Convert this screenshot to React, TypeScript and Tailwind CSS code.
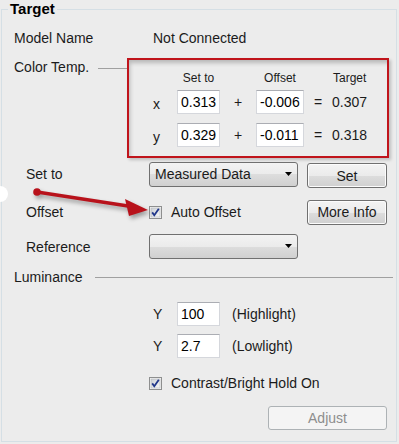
import React from 'react';

function TextBox({ value, w }: { value: string; w: string }) {
  return (
    <div
      className={`${w} flex h-[24px] items-center border border-[#d5d7dc] border-t-[#abadb3] bg-white pl-[3px] text-[14px] text-black`}
    >
      {value}
    </div>
  );
}

function Combo({ value }: { value?: string }) {
  return (
    <div className="flex h-[25px] w-[149px] items-center justify-between rounded-[3px] border border-[#707070] bg-[linear-gradient(to_bottom,#f3f3f3_0%,#ebebeb_50%,#dddddd_50%,#d0d0d0_100%)] pl-[5px] pr-[5px]">
      <span>{value}</span>
      <svg width="7" height="4" viewBox="0 0 7 4">
        <polygon points="0,0 7,0 3.5,4" fill="#000" />
      </svg>
    </div>
  );
}

function Button({ label, w, disabled }: { label: string; w: string; disabled?: boolean }) {
  if (disabled) {
    return (
      <div className={`${w} flex h-[24px] items-center justify-center rounded-[3px] border border-[#adb2b5] bg-[#f4f4f4] text-[#8d8d8d]`}>
        {label}
      </div>
    );
  }
  return (
    <div className={`${w} flex h-[25px] items-center justify-center rounded-[3px] border border-[#707070] bg-[linear-gradient(to_bottom,#f3f3f3_0%,#ebebeb_50%,#dddddd_50%,#d0d0d0_100%)] shadow-[inset_0_0_0_1px_#fcfcfc]`}>
      {label}
    </div>
  );
}

function CheckBox() {
  return (
    <svg width="13" height="13" viewBox="0 0 13 13" className="shrink-0">
      <defs>
        <linearGradient id="cb" x1="0" y1="0" x2="1" y2="1">
          <stop offset="0" stopColor="#cbcfd5" />
          <stop offset="1" stopColor="#f7f7f7" />
        </linearGradient>
      </defs>
      <rect x="0.5" y="0.5" width="12" height="12" fill="#f4f4f4" stroke="#8e8f8f" />
      <rect x="2" y="2" width="9" height="9" fill="url(#cb)" stroke="#b5b8bd" strokeWidth="0.6" />
      <path d="M3.2 6.4 L5.3 9.3 L9.8 2.8" fill="none" stroke="#21378a" strokeWidth="1.8" />
    </svg>
  );
}

function CtRow({ axis, set, offset, target, top }: { axis: string; set: string; offset: string; target: string; top: string }) {
  return (
    <div className={`${top} grid h-[24px] grid-cols-[24px_43px_36px_48px_28px_1fr] items-center text-[14px]`}>
      <span className="pt-[3px]">{axis}</span>
      <TextBox value={set} w="w-[43px]" />
      <span className="text-center">+</span>
      <TextBox value={offset} w="w-[48px]" />
      <span className="text-center">=</span>
      <span>{target}</span>
    </div>
  );
}

export default function App() {
  return (
    <div className="relative h-[444px] w-[399px] overflow-hidden bg-[#ececec] font-['Liberation_Sans',Arial,sans-serif] text-[14px] leading-[20px] text-[#1b1b1b]">
      <fieldset className="ml-[1px] h-[442px] w-[396px] border border-[#d5dfe5] p-0">
        <legend className="ml-[6px] px-[2px] text-[15px] font-bold leading-[18px] text-black">Target</legend>
        <div className="flex flex-col pl-[12px] pr-[3px]">
          <div className="mt-[10px] flex h-[20px] items-center">
            <div className="w-[139px]">Model Name</div>
            <div>Not Connected</div>
          </div>

          <div className="mt-[10px] flex">
            <div className="flex w-[113px] items-start">
              <span className="leading-[18px]">Color Temp.</span>
              <div className="ml-[9px] mt-[10px] h-px flex-1 bg-[#a0a0a0]" />
            </div>
            <div className="w-[262px] border-2 border-[#c0141b] pb-[9px] pl-[24px] pt-[10px] shadow-[inset_4px_6px_4px_-3px_rgba(0,0,0,0.22),2px_2px_3px_rgba(0,0,0,0.2)]">
              <div className="grid h-[16px] grid-cols-[24px_43px_36px_48px_28px_1fr] text-[12px] leading-[16px]">
                <span />
                <span className="text-center">Set to</span>
                <span />
                <span className="text-center">Offset</span>
                <span />
                <span className="pl-px">Target</span>
              </div>
              <CtRow top="mt-[4px]" axis="x" set="0.313" offset="-0.006" target="0.307" />
              <CtRow top="mt-[9px]" axis="y" set="0.329" offset="-0.011" target="0.318" />
            </div>
          </div>

          <div className="mt-[3px] flex h-[26px] items-center">
            <div className="w-[135px] pl-[12px]">Set to</div>
            <Combo value="Measured Data" />
            <div className="ml-[9px] mt-[3px]">
              <Button label="Set" w="w-[80px]" />
            </div>
          </div>

          <div className="mt-[12px] flex h-[26px] items-center">
            <div className="w-[135px] pl-[12px]">Offset</div>
            <div className="flex w-[149px] items-center">
              <CheckBox />
              <span className="ml-[9px]">Auto Offset</span>
            </div>
            <div className="ml-[9px]">
              <Button label="More Info" w="w-[80px]" />
            </div>
          </div>

          <div className="mt-[8px] flex h-[26px] items-center">
            <div className="w-[135px] pl-[12px] pt-[2px]">Reference</div>
            <Combo />
          </div>

          <div className="mt-[8px] flex h-[20px] items-center">
            <span>Luminance</span>
            <div className="ml-[12px] h-px flex-1 bg-[#a0a0a0]" />
          </div>

          <div className="mt-[15px] flex h-[24px] items-center">
            <div className="w-[139px]" />
            <span className="w-[24px]">Y</span>
            <TextBox value="100" w="w-[43px]" />
            <span className="ml-[12px]">(Highlight)</span>
          </div>
          <div className="mt-[8px] flex h-[24px] items-center">
            <div className="w-[139px]" />
            <span className="w-[24px]">Y</span>
            <TextBox value="2.7" w="w-[43px]" />
            <span className="ml-[12px]">(Lowlight)</span>
          </div>

          <div className="mt-[15px] flex h-[20px] items-center pl-[135px]">
            <CheckBox />
            <span className="ml-[9px]">Contrast/Bright Hold On</span>
          </div>

          <div className="mt-[13px] flex justify-end pr-[6px]">
            <Button label="Adjust" w="w-[119px]" disabled />
          </div>
        </div>
      </fieldset>

      <svg
        className="pointer-events-none absolute left-0 top-0 drop-shadow-[2px_3px_2px_rgba(0,0,0,0.35)]"
        width="399"
        height="444"
        viewBox="0 0 399 444"
      >
        <circle cx="37" cy="192" r="3.8" fill="#b8121b" />
        <line x1="37" y1="192" x2="128" y2="206" stroke="#b8121b" strokeWidth="3.6" />
        <polygon points="125,199 148,210 129,216" fill="#b8121b" />
      </svg>
      <div className="absolute left-[-8px] top-[186px] h-[16px] w-[16px] rounded-full bg-white" />
    </div>
  );
}
